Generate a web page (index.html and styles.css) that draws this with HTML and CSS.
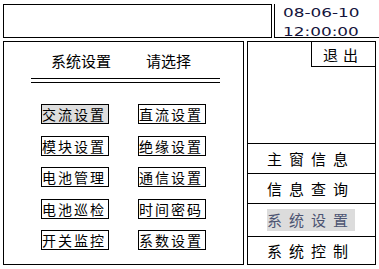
FILE: index.html
```html
<!DOCTYPE html>
<html lang="zh">
<head>
    <meta charset="UTF-8">
    <meta name="viewport" content="width=device-width, initial-scale=1.0">
    <title>系统设置</title>
    <link rel="stylesheet" href="styles.css">
</head>
<body>
    <div class="screen">
        <div class="top">
            <div class="top-left"></div>
            <div class="clock">
                <div class="clock-line"><span>08-06-10</span></div>
                <div class="clock-line"><span>12:00:00</span></div>
            </div>
        </div>

        <div class="main">
            <div class="setup">
                <div class="setup-title"><span>系统设置</span><span class="hint">请选择</span></div>
                <div class="rule"></div>
                <div class="btn-grid">
                    <div class="btn active">交流设置</div>
                    <div class="btn">直流设置</div>
                    <div class="btn">模块设置</div>
                    <div class="btn">绝缘设置</div>
                    <div class="btn">电池管理</div>
                    <div class="btn">通信设置</div>
                    <div class="btn">电池巡检</div>
                    <div class="btn">时间密码</div>
                    <div class="btn">开关监控</div>
                    <div class="btn">系数设置</div>
                </div>
            </div>

            <div class="menu">
                <div class="exit-row"><div class="exit">退出</div></div>
                <div class="menu-fill"></div>
                <div class="menu-item">主窗信息</div>
                <div class="menu-item">信息查询</div>
                <div class="menu-item tall"><span class="current">系统设置</span></div>
                <div class="menu-item short">系统控制</div>
            </div>
        </div>
    </div>
</body>
</html>
```

FILE: styles.css
```css
* {
    margin: 0;
    padding: 0;
    box-sizing: border-box;
}
body {
    margin: 0;
    background-color: #fff;
    color: #000;
    font-family: "Noto Sans CJK SC", sans-serif;
}
.screen {
    width: 379px;
    height: 269px;
    padding: 4px 0 0 3px;
}

/* top bar */
.top {
    display: flex;
    height: 34px;
}
.top-left {
    width: 269px;
    border: 1px solid #000;
}
.clock {
    flex: 1;
    margin-left: 2px;
    border-left: 1px solid #000;
    border-bottom: 1px solid #000;
    padding: 2px 0 0 8px;
}
.clock-line {
    font-family: "DejaVu Sans", sans-serif;
    font-size: 12.5px;
    line-height: 14px;
    color: #14143c;
}
.clock-line + .clock-line {
    margin-top: 5px;
}
.clock-line span {
    display: inline-block;
    transform: scaleX(1.35);
    transform-origin: left center;
}

/* main area */
.main {
    display: flex;
    margin-top: 3px;
    height: 224px;
}
.setup {
    width: 241px;
    border: 1px solid #000;
}
.setup-title {
    margin-top: 9px;
    padding-left: 47px;
    font-size: 15px;
    line-height: 20px;
}
.setup-title .hint {
    margin-left: 35px;
}
.rule {
    margin: 7px 0 0 27px;
    width: 189px;
    height: 5px;
    border-top: 1px solid #000;
    border-bottom: 1px solid #000;
}
.btn-grid {
    display: grid;
    grid-template-columns: 68px 68px;
    grid-auto-rows: 20px;
    column-gap: 29px;
    row-gap: 11.5px;
    margin: 21px 0 0 37px;
}
.btn {
    border: 1px solid #000;
    font-size: 14px;
    line-height: 18px;
    letter-spacing: 2px;
    white-space: nowrap;
}
.btn.active {
    background-color: #dedede;
}

/* right menu */
.menu {
    display: flex;
    flex-direction: column;
    width: 129px;
    margin-left: 3px;
    border: 1px solid #000;
}
.exit-row {
    display: flex;
    justify-content: flex-end;
}
.exit {
    width: 64px;
    height: 25px;
    border-left: 1px solid #000;
    border-bottom: 1px solid #000;
    padding: 2px 0 0 11px;
    font-size: 15px;
    line-height: 21px;
    letter-spacing: 5px;
}
.menu-fill {
    flex: 1;
}
.menu-item {
    display: flex;
    align-items: center;
    height: 30px;
    border-top: 1px solid #000;
    padding-left: 19px;
    font-size: 15px;
    letter-spacing: 7px;
    white-space: nowrap;
}
.menu-item.tall {
    height: 33px;
}
.menu-item.short {
    height: 28px;
}
.menu-item .current {
    display: inline-block;
    height: 22px;
    line-height: 22px;
    background-color: #dcdcdc;
    color: #4c5472;
}
```
